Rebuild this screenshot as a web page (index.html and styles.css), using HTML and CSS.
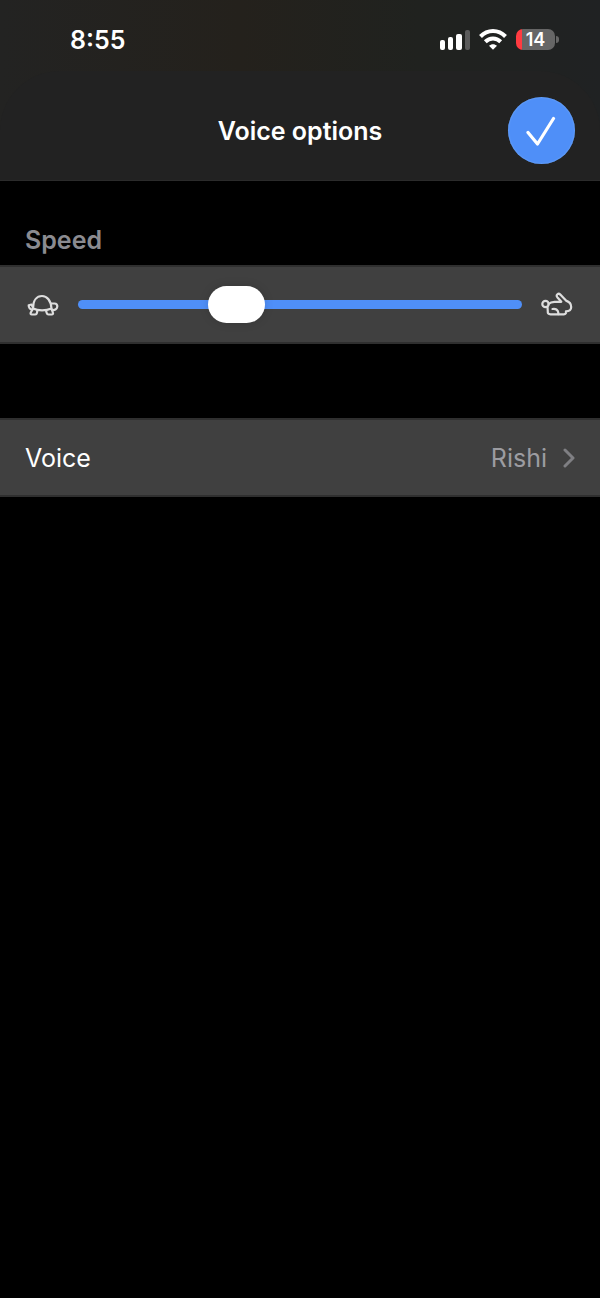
FILE: index.html
```html
<!DOCTYPE html>
<html lang="en">
<head>
  <meta charset="UTF-8">
  <meta name="viewport" content="width=device-width, initial-scale=1">
  <title>Voice options</title>
  <link rel="stylesheet" href="styles.css">
</head>
<body>
  <div class="top">
    <div class="status-bar">
      <span class="time">8:55</span>
      <div class="status-icons">
        <svg class="signal" width="30" height="20" viewBox="0 0 30 20" aria-hidden="true">
          <rect x="0" y="10" width="5" height="10" rx="2" fill="#fff"/>
          <rect x="8" y="7" width="5" height="13" rx="2" fill="#fff"/>
          <rect x="16" y="4" width="6" height="16" rx="2" fill="#fff"/>
          <rect x="25" y="0" width="5" height="20" rx="2" fill="#5b5b5b"/>
        </svg>
        <svg class="wifi" width="28" height="21" viewBox="0 0 28 21" fill="none" stroke="#fff" stroke-width="4" aria-hidden="true">
          <path d="M1.5 7.5C8.500 .3 19.500 .3 26.500 7.500"/>
          <path d="M6.300 12.800C10.700 8.500 17.300 8.500 21.700 12.800"/>
          <path d="M14 20.800l-4-4c2.300-2.100 5.700-2.100 8 0z" fill="#fff" stroke="none"/>
        </svg>
        <div class="battery"><span class="battery-level">14</span></div>
      </div>
    </div>
    <header class="header">
      <h1 class="title">Voice options</h1>
      <button class="done" type="button" aria-label="Done">
        <svg width="32" height="30" viewBox="0 0 32 30" fill="none" stroke="#fff" stroke-width="3.200" stroke-linecap="round" stroke-linejoin="round" aria-hidden="true">
          <path d="M2 16.500L11.500 28L27.500 2.500"/>
        </svg>
      </button>
    </header>
  </div>

  <main>
    <label class="section-label" for="speed">Speed</label>
    <div class="row speed-row">
      <svg class="animal" width="34" height="26" viewBox="0 0 34 26" aria-hidden="true">
        <path d="M8 16.500C8 8 12 4 17 4s9 4.500 9.500 12.500C21 19 13 19 8 16.500z"/>
        <path d="M8 15.500L6.500 12.500L3.700 13.200C3.700 15.500 5 17.300 7.500 17.500"/>
        <path d="M26 11.500h3.500c2 0 3 1.500 2.800 3.200c-.3 2.500-2.800 3.800-5.500 3.300"/>
        <path d="M7.500 17.500L5.800 20.500c-.6 1.300 0 2 1 2h3.400c1 0 1.500-.5 1.700-1.500l.5-2.500"/>
        <path d="M21 18.500l.7 2.500c.3 1 .8 1.500 1.800 1.500h3.200c1.200 0 1.600-.8 1.200-1.800L26.600 17"/>
      </svg>
      <input class="slider" id="speed" type="range" min="0" max="1" step="0.005" value="0.335">
      <svg class="animal" width="34" height="26" viewBox="0 0 34 26" aria-hidden="true">
        <circle cx="4.500" cy="12" r="3.200"/>
        <path d="M7.500 12c1.500-1.500 3.500-2.200 6-2.200h6.800L16.300 5.200C14.600 2.900 17.300 .6 19.300 2.600l5.700 6c3 1 5.200 3.200 5.200 6.400c0 2.500-2 4.300-5.300 4.300c.5 1.700-.3 3-2 3H9.500c-2 0-3-1.200-2.700-2.800L6.500 15"/>
        <path d="M11.500 17c3-.8 5.500 1 5.800 3.700v1.500"/>
      </svg>
    </div>

    <button class="row voice-row" type="button">
      <span class="voice-name">Voice</span>
      <span class="voice-value">Rishi</span>
      <svg class="chevron" width="12" height="20" viewBox="0 0 12 20" fill="none" stroke="#7f7f83" stroke-width="3" stroke-linecap="round" stroke-linejoin="round" aria-hidden="true">
        <path d="M2 2l8 8l-8 8"/>
      </svg>
    </button>
  </main>
</body>
</html>
```
FILE: styles.css
```css
* { box-sizing: border-box; }
body {
  margin: 0;
  background: #000;
  color: #fff;
  font-family: Inter, "Liberation Sans", sans-serif;
  font-size: 25px;
  line-height: 32px;
}
button { font: inherit; color: inherit; border: none; cursor: pointer; }

.top { background: linear-gradient(90deg, #232322, #24211c 40%, #20221f 70%, #202223); }
.status-bar {
  display: flex;
  justify-content: space-between;
  align-items: center;
  height: 71px;
  padding: 8px 42px 0 70px;
}
.time { font-weight: 600; }
.status-icons { display: flex; align-items: center; gap: 9px; }
.battery {
  position: relative;
  width: 39px;
  height: 21px;
  margin-right: 3px;
  border-radius: 7px;
  background: linear-gradient(90deg, #ff3b41 6px, #666 6px);
  text-align: center;
}
.battery::after {
  content: "";
  position: absolute;
  right: -4px;
  top: 7px;
  width: 3px;
  height: 7px;
  border-radius: 0 3px 3px 0;
  background: #666;
}
.battery-level { display: block; font-size: 18px; font-weight: 600; line-height: 21px; }

.header {
  display: grid;
  grid-template-columns: 1fr auto 1fr;
  align-items: center;
  height: 110px;
  padding: 10px 25px 0;
  border-bottom: 1px solid #2b2b2b;
  border-radius: 60px 60px 0 0;
  background: #222;
}
.title { grid-column: 2; margin: 0; font-size: 25px; font-weight: 600; }
.done {
  display: flex;
  justify-content: center;
  align-items: center;
  justify-self: end;
  width: 67px;
  height: 67px;
  padding: 0;
  border-radius: 50%;
  background: #4f8ff8;
  box-shadow: inset 0 0 2px #7db4ff;
}

.section-label {
  display: block;
  padding: 43px 25px 9px;
  color: #8b8b90;
  font-weight: 600;
}
.row {
  display: flex;
  align-items: center;
  width: 100%;
  height: 79px;
  padding: 0 25px;
  border: solid #2f2f2f;
  border-width: 2px 0;
  background: #404040;
}
.speed-row { gap: 19px; }
.animal {
  flex: none;
  fill: none;
  stroke: #dedede;
  stroke-width: 2.2;
  stroke-linecap: round;
  stroke-linejoin: round;
}
.slider {
  -webkit-appearance: none;
  appearance: none;
  flex: 1;
  min-width: 0;
  height: 37px;
  margin: 0;
  background: transparent;
}
.slider::-webkit-slider-runnable-track {
  height: 9px;
  border-radius: 5px;
  background: #4f8ff8;
}
.slider::-webkit-slider-thumb {
  -webkit-appearance: none;
  width: 57px;
  height: 37px;
  margin-top: -14px;
  border-radius: 19px;
  background: #fff;
  box-shadow: 0 0 10px rgba(0, 0, 0, 0.15);
}

.voice-row { margin-top: 74px; text-align: left; }
.voice-name { flex: 1; }
.voice-value { color: #9c9ca1; }
.chevron { margin-left: 16px; }
```
